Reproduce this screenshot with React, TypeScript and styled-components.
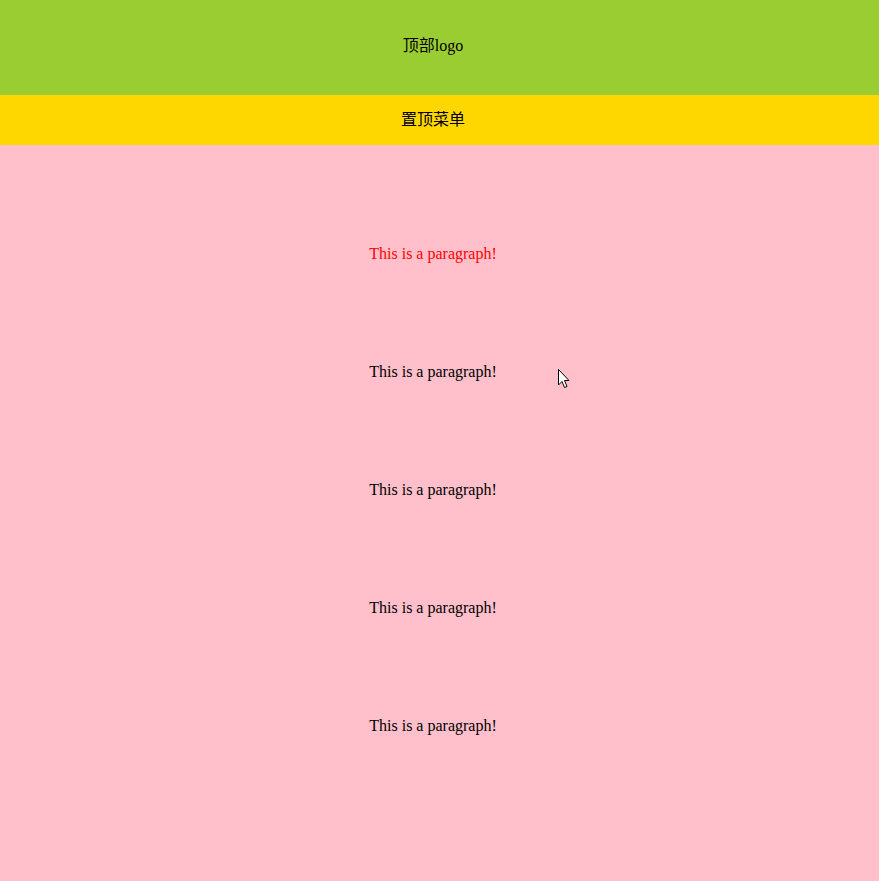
import React from "react";
import styled, { createGlobalStyle } from "styled-components";

const Global = createGlobalStyle`
  html, body { margin: 0; padding: 0; }
  body {
    font-family: "Liberation Serif", "Noto Sans CJK SC", serif;
    font-size: 16px;
    color: #000;
    background: pink;
  }
`;

const Page = styled.div`
  min-height: 100vh;
  display: flex;
  flex-direction: column;
  position: relative;
`;

const Header = styled.header`
  height: 95px;
  background: yellowgreen;
  display: flex;
  align-items: center;
  justify-content: center;
  padding-right: 13px;
  padding-bottom: 8px;
  box-sizing: border-box;
`;

const Menu = styled.nav`
  height: 50px;
  background: gold;
  display: flex;
  align-items: center;
  justify-content: center;
  padding-right: 13px;
  padding-bottom: 4px;
  box-sizing: border-box;
`;

const Content = styled.main`
  flex: 1;
  background: pink;
  padding: 50px 13px 0 0;
`;

const Para = styled.p<{ $highlight?: boolean }>`
  margin: 0;
  height: 118px;
  line-height: 118px;
  text-align: center;
  color: ${(p) => (p.$highlight ? "red" : "#000")};
`;

const Cursor = styled.svg`
  position: absolute;
  left: 557px;
  top: 368px;
  pointer-events: none;
`;

export default function App() {
  return (
    <>
      <Global />
      <Page>
        <Header>顶部logo</Header>
        <Menu>置顶菜单</Menu>
        <Content>
          <Para $highlight>This is a paragraph!</Para>
          <Para>This is a paragraph!</Para>
          <Para>This is a paragraph!</Para>
          <Para>This is a paragraph!</Para>
          <Para>This is a paragraph!</Para>
        </Content>
        <Cursor width="14" height="22" viewBox="0 0 14 22">
          <path
            d="M1.5 1.5 L1.5 17 L5 13.5 L7.5 19.5 L10 18.5 L7.5 12.5 L12 12.5 Z"
            fill="#fff"
            stroke="#000"
            strokeWidth="1"
            strokeLinejoin="miter"
          />
        </Cursor>
      </Page>
    </>
  );
}
